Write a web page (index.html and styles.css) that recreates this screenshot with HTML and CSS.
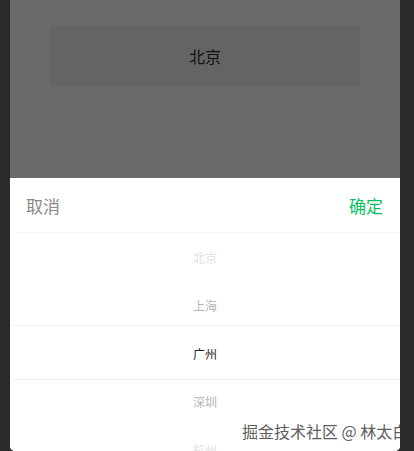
FILE: index.html
```html
<!DOCTYPE html>
<html lang="zh-CN">
<head>
    <meta charset="UTF-8">
    <meta name="viewport" content="width=device-width, initial-scale=1.0">
    <title>城市选择</title>
    <link rel="stylesheet" href="styles.css">
</head>
<body>
    <div class="phone">
        <!-- Strona pod maską -->
        <div class="page-mask">
            <div class="city-box">北京</div>
        </div>

        <!-- Panel wyboru -->
        <div class="sheet">
            <div class="sheet-header">
                <span class="btn-cancel">取消</span>
                <span class="btn-confirm">确定</span>
            </div>
            <div class="picker">
                <div class="picker-indicator"></div>
                <div class="picker-item far">北京</div>
                <div class="picker-item near">上海</div>
                <div class="picker-item active">广州</div>
                <div class="picker-item near">深圳</div>
                <div class="picker-item far">杭州</div>
            </div>
        </div>

        <div class="watermark">掘金技术社区 @ 林太白</div>
    </div>
</body>
</html>
```

FILE: styles.css
```css
/* Reset */
* {
  margin: 0;
  padding: 0;
  box-sizing: border-box;
}

body {
  background: #2b2b2b;
  font-family: "Noto Sans CJK SC", "Noto Sans", sans-serif;
  height: 451px;
  overflow: hidden;
}

.phone {
  position: relative;
  width: 390px;
  height: 451px;
  margin: 0 10px;
  background: #fff;
  overflow: hidden;
  border-radius: 0 0 5px 5px;
  display: flex;
  flex-direction: column;
}

/* Szara maska */
.page-mask {
  flex-shrink: 0;
  height: 178px;
  background: #6a6a6a;
  padding-top: 25px;
}

.city-box {
  margin: 0 40px;
  height: 62px;
  background: #646464;
  border: 1px solid #676767;
  display: flex;
  justify-content: center;
  align-items: center;
  font-size: 16px;
  color: #111;
}

/* Panel */
.sheet {
  flex-shrink: 0;
  background: #fff;
}

.sheet-header {
  height: 55px;
  margin-left: 6px;
  padding: 0 17px 0 10px;
  border-bottom: 1px solid #f3f3f3;
  display: flex;
  justify-content: space-between;
  align-items: center;
  font-size: 17px;
}

.btn-cancel {
  color: #888;
}

.btn-confirm {
  color: #07c160;
}

.picker {
  position: relative;
}

.picker-indicator {
  position: absolute;
  top: 92px;
  left: 2px;
  right: 0;
  height: 55px;
  border-top: 1px solid #f0f0f0;
  border-bottom: 1px solid #f0f0f0;
}

.picker-item {
  height: 48px;
  display: flex;
  justify-content: center;
  align-items: center;
  font-size: 12px;
}

.picker-item.far {
  color: #e2e2e2;
}

.picker-item.near {
  color: #b4b4b4;
}

.picker-item.active {
  color: #222;
}

.watermark {
  position: absolute;
  left: 232px;
  top: 419px;
  font-size: 16px;
  color: #5e5e5e;
  white-space: nowrap;
  text-shadow: 0 0 2px #fff;
}
```
